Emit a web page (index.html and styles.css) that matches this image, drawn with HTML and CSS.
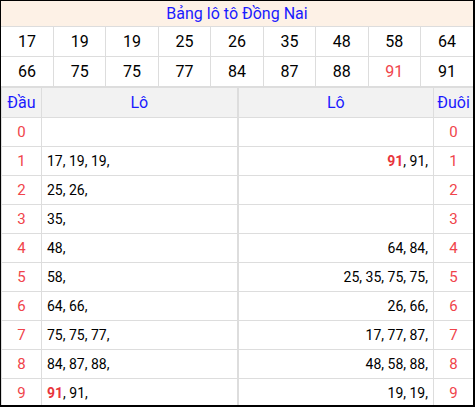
FILE: index.html
```html
<!DOCTYPE html>
<html>
<head>
<meta charset="utf-8">
<link rel="stylesheet" href="styles.css">
</head>
<body>
<div class="frame">
  <table class="loto">
    <tr><td class="title" colspan="9">Bảng lô tô Đồng Nai</td></tr>
    <tr><td>17</td><td>19</td><td>19</td><td>25</td><td>26</td><td>35</td><td>48</td><td>58</td><td>64</td></tr>
    <tr><td>66</td><td>75</td><td>75</td><td>77</td><td>84</td><td>87</td><td>88</td><td class="red">91</td><td>91</td></tr>
  </table>
  <div class="halves">
    <table class="half left">
      <tr class="head"><td class="key">Đầu</td><td>Lô</td></tr>
      <tr><td class="key">0</td><td class="val"></td></tr>
      <tr><td class="key">1</td><td class="val">17, 19, 19,</td></tr>
      <tr><td class="key">2</td><td class="val">25, 26,</td></tr>
      <tr><td class="key">3</td><td class="val">35,</td></tr>
      <tr><td class="key">4</td><td class="val">48,</td></tr>
      <tr><td class="key">5</td><td class="val">58,</td></tr>
      <tr><td class="key">6</td><td class="val">64, 66,</td></tr>
      <tr><td class="key">7</td><td class="val">75, 75, 77,</td></tr>
      <tr><td class="key">8</td><td class="val">84, 87, 88,</td></tr>
      <tr><td class="key">9</td><td class="val"><b class="hot">91</b>, 91,</td></tr>
    </table>
    <table class="half right">
      <tr class="head"><td>Lô</td><td class="key">Đuôi</td></tr>
      <tr><td class="val"></td><td class="key">0</td></tr>
      <tr><td class="val"><b class="hot">91</b>, 91,</td><td class="key">1</td></tr>
      <tr><td class="val"></td><td class="key">2</td></tr>
      <tr><td class="val"></td><td class="key">3</td></tr>
      <tr><td class="val">64, 84,</td><td class="key">4</td></tr>
      <tr><td class="val">25, 35, 75, 75,</td><td class="key">5</td></tr>
      <tr><td class="val">26, 66,</td><td class="key">6</td></tr>
      <tr><td class="val">17, 77, 87,</td><td class="key">7</td></tr>
      <tr><td class="val">48, 58, 88,</td><td class="key">8</td></tr>
      <tr><td class="val">19, 19,</td><td class="key">9</td></tr>
    </table>
  </div>
</div>
</body>
</html>
```
FILE: styles.css
```css
html, body { margin: 0; padding: 0; background: #fff; }
body { font-family: Roboto, "Liberation Sans", sans-serif; color: #000; }
.frame {
  width: 475px;
  height: 407px;
  box-sizing: border-box;
  border-style: solid;
  border-color: #000;
  border-width: 1px 2px 2px 1px;
  overflow: hidden;
}
table { border-collapse: collapse; }
.loto { width: 100%; table-layout: fixed; }
.loto td {
  border: 1px solid #ddd;
  height: 29px;
  padding: 0;
  text-align: center;
  font-size: 16px;
}
.loto tr:first-child td { border-top: 0; }
.loto td:first-child { border-left: 0; }
.loto td:last-child { border-right: 0; }
.loto td.title {
  height: 25px;
  background: #fdf1e6;
  color: #1a1aff;
  font-size: 16px;
}
.red { color: #f0444b; }
.halves { display: flex; border-top: 1px solid #ddd; border-left: 1px solid #ddd; }
.half { width: 50%; table-layout: fixed; }
.half td {
  border: 1px solid #ddd;
  height: 28px;
  padding: 0;
  font-size: 14px;
}
.half.left { border-right: 1px solid #ddd; }
.half.right { border-left: 1px solid #ddd; }
.half td.key { width: 39px; text-align: center; color: #f0444b; font-size: 15px; }
.half.left td:first-child { border-left: 0; }
.half.right td:last-child { border-right: 0; }
.half tr.head td {
  height: 29px;
  background: #f2f2f2;
  color: #1a1aff;
  text-align: center;
  font-size: 16px;
  border-top: 0;
}
.half.left td.val { padding-left: 5px; text-align: left; }
.half.right td.val { padding-right: 5px; text-align: right; }
.hot { color: #e8343c; font-weight: bold; }
```
